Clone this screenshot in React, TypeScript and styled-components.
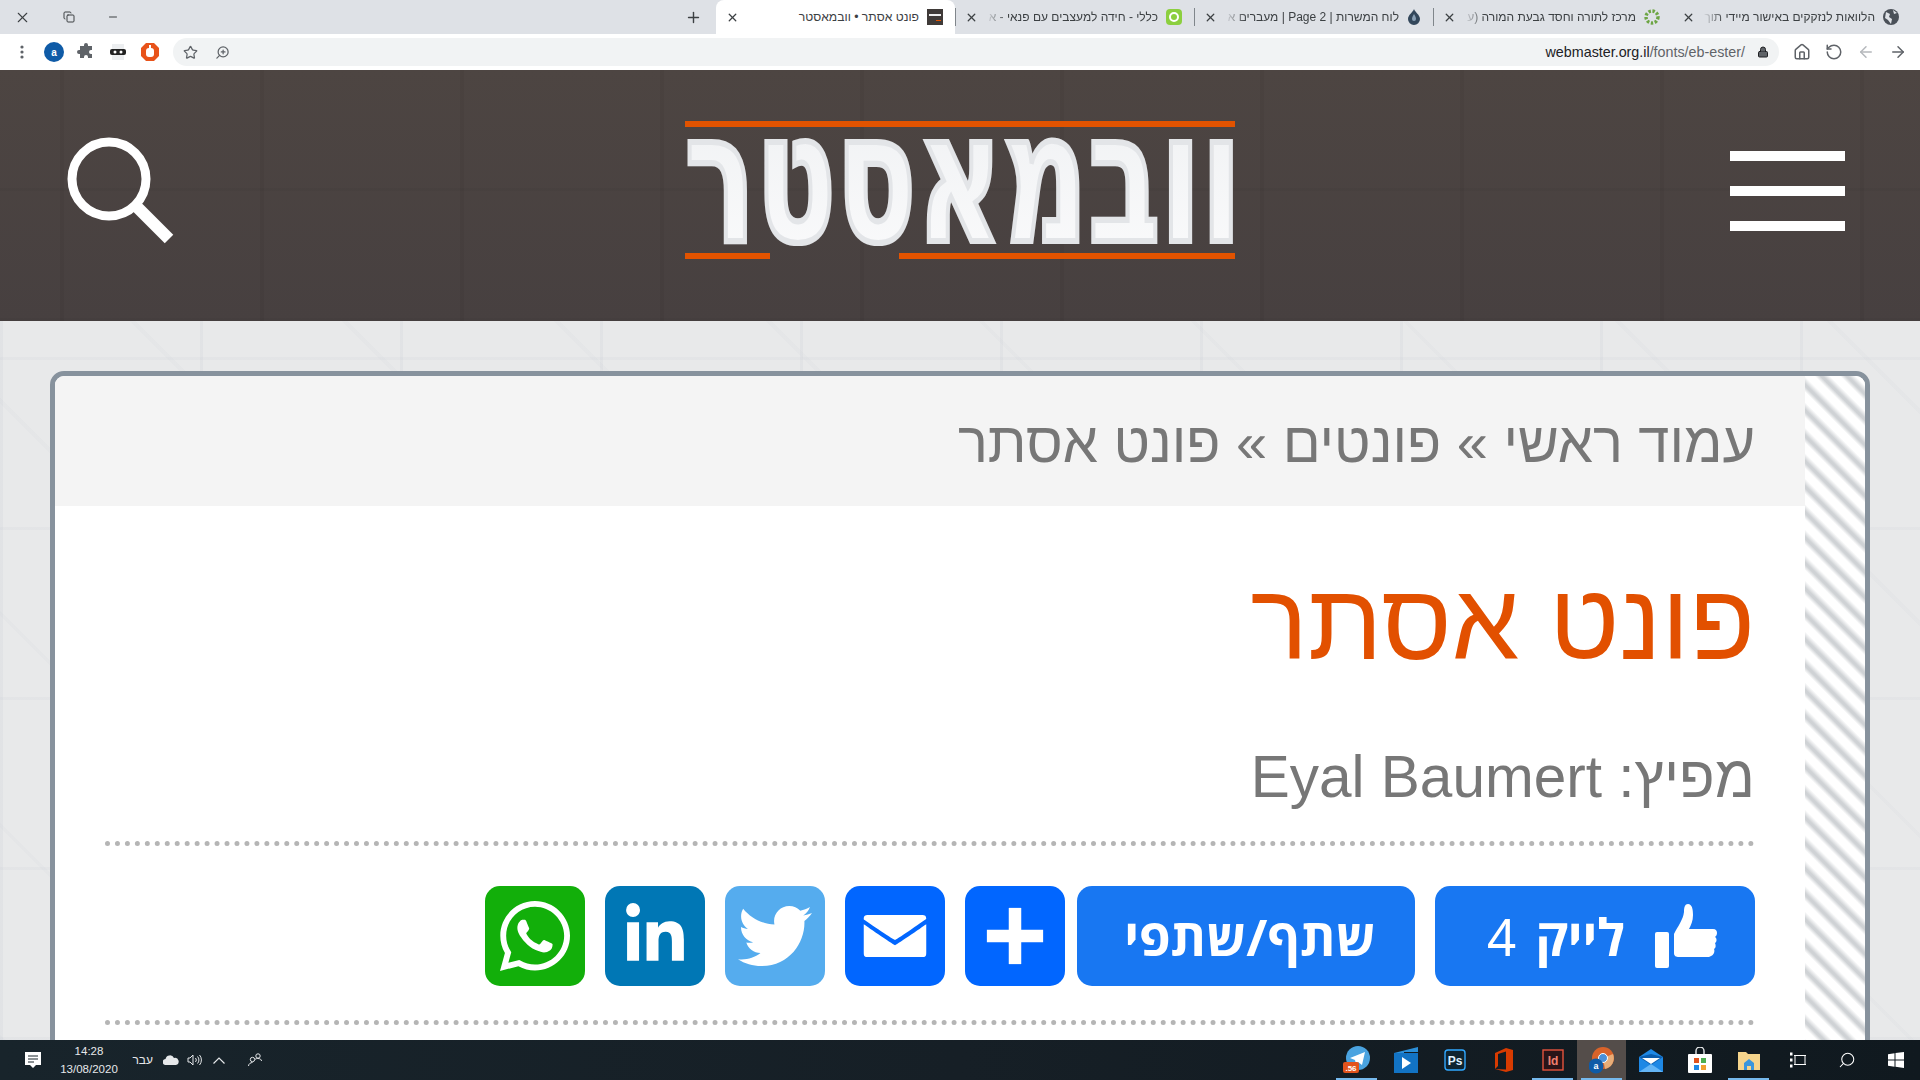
import React from 'react';
import styled, { createGlobalStyle } from 'styled-components';
import { ArrowLeft, ArrowRight, Copy, Home, Lock, Minus, Plus, RotateCcw, Search, Star, X, ZoomIn } from 'lucide-react';
import { FaLinkedinIn, FaTwitter, FaWhatsapp } from 'react-icons/fa';

const GlobalStyle = createGlobalStyle`
	html, body {
		margin: 0;
		padding: 0;
		overflow: hidden;
	}
	body {
		font-family: 'Liberation Sans', Arial, sans-serif;
	}
	* {
		box-sizing: border-box;
	}
`;

const Screen = styled.div`
	width: 1920px;
	height: 1080px;
	display: flex;
	flex-direction: column;
	overflow: hidden;
`;

/* browser chrome */
const TabStrip = styled.div`
	height: 34px;
	flex: none;
	display: flex;
	direction: rtl;
	align-items: stretch;
	padding-right: 9px;
	background: #dee1e6;
`;

const Tab = styled.div<{ $active?: boolean }>`
	width: 239px;
	flex: none;
	position: relative;
	display: flex;
	align-items: center;
	gap: 8px;
	padding: 0 12px 0 10px;
	font-size: 12px;
	color: #3c4043;
	background: ${(p) => (p.$active ? '#fff' : 'transparent')};
	border-radius: ${(p) => (p.$active ? '8px 8px 0 0' : '0')};
	${(p) =>
		!p.$active &&
		`&:not(:first-child)::after {
		content: '';
		position: absolute;
		left: 0;
		top: 8px;
		bottom: 8px;
		width: 1px;
		background: #80868b;
	}`}
`;

const TabTitle = styled.span`
	flex: 1;
	white-space: nowrap;
	overflow: hidden;
	-webkit-mask-image: linear-gradient(to left, #000 88%, transparent);
	mask-image: linear-gradient(to left, #000 88%, transparent);
`;

const ActiveTabTitle = styled.span`
	flex: 1;
	white-space: nowrap;
	font-size: 12.2px;
`;

const NewTab = styled.div`
	width: 46px;
	display: flex;
	align-items: center;
	justify-content: center;
	color: #3c4043;
`;

const WindowControls = styled.div`
	margin-right: auto;
	width: 135px;
	padding: 0 16px 0 14px;
	display: flex;
	align-items: center;
	justify-content: space-between;
	color: #3c4043;
`;

const Toolbar = styled.div`
	height: 36px;
	flex: none;
	display: flex;
	direction: rtl;
	align-items: center;
	background: #fff;
	padding: 0 13px 0 0;
`;

const NavGroup = styled.div`
	width: 128px;
	display: flex;
	align-items: center;
	gap: 14px;
	color: #5f6368;
	padding-left: 14px;
`;

const Omnibox = styled.div`
	width: 1606px;
	height: 28px;
	flex: none;
	display: flex;
	align-items: center;
	gap: 12px;
	padding: 0 10px;
	background: #f1f3f4;
	border-radius: 14px;
	color: #202124;
	font-size: 14.3px;
`;

const Url = styled.span`
	direction: ltr;
	color: #202124;
	span {
		color: #5f6368;
	}
`;

const OmniboxIcons = styled.div`
	margin-right: auto;
	display: flex;
	align-items: center;
	gap: 17px;
	color: #5f6368;
`;

const PageZoomIcon = styled(ZoomIn)`
	transform: scaleX(-1);
`;

const Extensions = styled.div`
	flex: 1;
	display: flex;
	direction: ltr;
	align-items: center;
	gap: 12px;
	padding-left: 18px;
`;

const ExtensionDots = styled.svg`
	margin-right: 6px;
`;

const Avatar = styled.div`
	width: 20px;
	height: 20px;
	border-radius: 50%;
	background: #0f5ba7;
	color: #fff;
	font-size: 10px;
	font-weight: 700;
	display: flex;
	align-items: center;
	justify-content: center;
`;

/* site header */
const SiteHeader = styled.header`
	height: 251px;
	flex: none;
	display: grid;
	grid-template-columns: 1fr auto 1fr;
	align-items: center;
	padding: 0 67px 10px;
	background-color: #4b4340;
	background-image: repeating-linear-gradient(90deg, rgba(0, 0, 0, 0.045) 0 4px, transparent 4px 200px),
		repeating-linear-gradient(0deg, rgba(0, 0, 0, 0.035) 0 3px, transparent 3px 130px),
		linear-gradient(#4d4542, #474040);
	background-position: 60px 0, 0 0, 0 0;
`;

const Burger = styled.div`
	justify-self: end;
	margin-right: 8px;
	width: 115px;
	display: flex;
	flex-direction: column;
	gap: 25px;
`;

const BurgerBar = styled.div`
	height: 10px;
	background: #fff;
`;

/* page */
const PageBody = styled.main`
	flex: 1;
	min-height: 0;
	overflow: hidden;
	padding: 50px 50px 0;
	background-color: #e8e9ea;
	background-image: repeating-linear-gradient(90deg, rgba(190, 195, 205, 0.16) 0 3px, transparent 3px 200px),
		repeating-linear-gradient(0deg, rgba(190, 195, 205, 0.12) 0 3px, transparent 3px 170px),
		repeating-linear-gradient(45deg, rgba(200, 204, 212, 0.1) 0 4px, transparent 4px 150px);
`;

const Card = styled.div`
	height: 900px;
	display: grid;
	grid-template-columns: 1fr 60px;
	border: 5px solid #87929d;
	border-radius: 14px;
	overflow: hidden;
	background: #fff;
`;

const Stripes = styled.div`
	background: repeating-linear-gradient(
		45deg,
		#fff 0,
		#fff 6px,
		#cfd2d5 10px,
		#cfd2d5 12px,
		#fff 17px,
		#fff 18px
	);
`;

const Main = styled.div`
	direction: rtl;
	display: flex;
	flex-direction: column;
`;

const Breadcrumb = styled.div`
	height: 130px;
	display: flex;
	align-items: center;
	padding: 4px 50px 0;
	background: #f4f4f4;
	color: #777;
	font-size: 56px;
	line-height: 1;
`;

const Content = styled.div`
	padding: 0 50px;
`;

const Title = styled.h1`
	margin: 65px 0 0;
	color: #e25000;
	font-size: 107.6px;
	font-weight: 400;
	line-height: 100px;
`;

const Publisher = styled.div`
	margin-top: 71px;
	padding-bottom: 29px;
	color: #777;
	font-size: 58.5px;
	line-height: 70px;
	border-bottom: 5px dotted #b5b5b5;
`;

const ShareRow = styled.div`
	display: flex;
	align-items: center;
	padding: 40px 0 34px;
	border-bottom: 5px dotted #b5b5b5;
`;

const WideButton = styled.div<{ $width: number; $gap: number }>`
	width: ${(p) => p.$width}px;
	height: 100px;
	flex: none;
	margin-left: ${(p) => p.$gap}px;
	padding-left: 8px;
	display: flex;
	align-items: center;
	justify-content: center;
	border-radius: 15px;
	background: #1877f2;
	color: #fff;
	font-family: 'Noto Sans', 'Open Sans', 'Liberation Sans', sans-serif;
	font-size: 51px;
	font-weight: 700;
	line-height: 1;
`;

const LikeButton = styled(WideButton)`
	justify-content: flex-start;
	padding: 0 38px 0 0;
	gap: 30px;
`;

const LikeCount = styled.span`
	font-weight: 400;
	margin-right: -11px;
`;

const IconButton = styled.div<{ $bg: string; $gap?: number }>`
	width: 100px;
	height: 100px;
	flex: none;
	margin-left: ${(p) => p.$gap ?? 20}px;
	display: flex;
	align-items: center;
	justify-content: center;
	border-radius: 15px;
	background: ${(p) => p.$bg};
	color: #fff;
`;

/* windows taskbar */
const Taskbar = styled.footer`
	height: 40px;
	flex: none;
	display: flex;
	justify-content: space-between;
	align-items: stretch;
	background: linear-gradient(90deg, #18242b, #161f26 50%, #10191f);
	color: #e6e8ea;
`;

const TrayLeft = styled.div`
	display: flex;
	align-items: center;
	padding-left: 25px;
`;

const TrayItem = styled.div<{ $gap: number; $width: number }>`
	margin-left: ${(p) => p.$gap}px;
	width: ${(p) => p.$width}px;
	flex: none;
	display: flex;
	align-items: center;
	justify-content: center;
`;

const Clock = styled.div`
	margin-left: 19px;
	width: 58px;
	flex: none;
	text-align: center;
	font-size: 11.5px;
	line-height: 18px;
	white-space: nowrap;
`;

const Lang = styled.div`
	margin-left: 13px;
	width: 22px;
	font-size: 12px;
	direction: rtl;
	white-space: nowrap;
`;

const Apps = styled.div`
	display: flex;
`;

const AppSlot = styled.div<{ $open?: boolean; $current?: boolean }>`
	width: 49px;
	position: relative;
	display: flex;
	align-items: center;
	justify-content: center;
	background: ${(p) => (p.$current ? '#544d4a' : 'transparent')};
	${(p) =>
		p.$open &&
		`&::after {
		content: '';
		position: absolute;
		left: 4px;
		right: 4px;
		bottom: 0;
		height: 2px;
		background: #76b9ed;
	}`}
`;

const TaskbarSearch = styled(Search)`
	transform: scaleX(-1);
`;

const Logo = () => (
	<svg width="570" height="140" viewBox="-10 0 570 140">
		<defs>
			<linearGradient id="logoFill" x1="0" y1="0" x2="0" y2="1">
				<stop offset="0" stopColor="#eef0f2" />
				<stop offset="1" stopColor="#fbfbfc" />
			</linearGradient>
		</defs>
		<rect x="0" y="0" width="550" height="6" fill="#e25300" />
		<rect x="0" y="132" width="85" height="6" fill="#e25300" />
		<rect x="214" y="132" width="336" height="6" fill="#e25300" />
		<g transform="translate(278 120) scale(1 1.81)">
			<text
				x="0"
				y="0"
				textAnchor="middle"
				textLength="557"
				lengthAdjust="spacingAndGlyphs"
				fontFamily="'DejaVu Sans', sans-serif"
				fontWeight="700"
				fontSize="100"
				fill="url(#logoFill)"
				stroke="#e3e5e8"
				strokeWidth="5"
				vectorEffect="non-scaling-stroke"
			>
				וובמאסטר
			</text>
		</g>
	</svg>
);

const SearchGlass = () => (
	<svg width="108" height="108" viewBox="0 0 108 108">
		<circle cx="42" cy="42" r="37" fill="none" stroke="#fff" strokeWidth="9" />
		<path d="M68 68 L102 102" stroke="#fff" strokeWidth="12" />
	</svg>
);

const ThumbIcon = () => (
	<svg width="62" height="64" viewBox="0 0 62 64">
		<rect x="0" y="28" width="14" height="36" rx="2" fill="#fff" />
		<path
			d="M19 30c4-8 9-14 10-22 0-5 1-8 4-8 4 0 5 5 5 11 0 6-2 10-4 14h24c3 0 4 2 4 4 0 2-1 3-2 4 2 1 2 5 0 6 1 2 1 5-1 6 1 2 0 6-3 7-1 1-3 1-5 1H24c-3 0-5-1-5-4z"
			fill="#fff"
		/>
	</svg>
);

const MailIcon = () => (
	<svg width="100" height="100" viewBox="0 0 32 32">
		<path
			fill="#fff"
			d="M26 21.25v-9s-9.1 6.35-9.984 6.68C15.144 18.616 6 12.25 6 12.25v9c0 1.25.266 1.5 1.5 1.5h17c1.266 0 1.5-.22 1.5-1.5zm-.015-10.765c0-.91-.265-1.235-1.485-1.235h-17c-1.255 0-1.5.39-1.5 1.3l.015.14s9.035 6.22 10 6.56c1.02-.395 9.985-6.7 9.985-6.7l-.015-.065z"
		/>
	</svg>
);

const PlusIcon = () => (
	<svg width="100" height="100" viewBox="0 0 32 32">
		<path fill="#fff" d="M14 7h4v18h-4z" />
		<path fill="#fff" d="M7 14h18v4H7z" />
	</svg>
);

const Favicon = ({ kind }: { kind: string }) => {
	if (kind === 'globe')
		return (
			<svg width="16" height="16" viewBox="0 0 16 16">
				<circle cx="8" cy="8" r="8" fill="#4a5058" />
				<path d="M3 3l4 2-1 3 3 2-1 5-3-4-3-2zM10 1l4 3-3 1z" fill="#dee1e6" />
			</svg>
		);
	if (kind === 'gear')
		return (
			<svg width="16" height="16" viewBox="0 0 16 16">
				<circle cx="8" cy="8" r="6" fill="none" stroke="#6da544" strokeWidth="3.4" strokeDasharray="2.4 1.6" />
			</svg>
		);
	if (kind === 'drop')
		return (
			<svg width="14" height="16" viewBox="0 0 14 16">
				<path d="M7 0c1 3 6 6 6 10a6 6 0 0 1-12 0c0-4 5-7 6-10z" fill="#33475b" />
				<path d="M7 5c1 2 2 3 2 5a2 2 0 0 1-4 0c0-2 1-3 2-5z" fill="#8aa0b5" />
			</svg>
		);
	if (kind === 'swirl')
		return (
			<svg width="16" height="16" viewBox="0 0 16 16">
				<rect width="16" height="16" rx="4" fill="#8ccf3f" />
				<circle cx="8" cy="8" r="4" fill="none" stroke="#fff" strokeWidth="2" />
			</svg>
		);
	return (
		<svg width="16" height="16" viewBox="0 0 16 16">
			<rect width="16" height="16" fill="#3f3a38" />
			<rect x="2" y="5" width="12" height="2" fill="#eee" />
			<rect x="9" y="11" width="5" height="1" fill="#e25300" />
		</svg>
	);
};

const tabs = [
	{ title: 'הלוואות לנזקקים באישור מיידי תוך', icon: 'globe' },
	{ title: 'מרכז לתורה וחסד גבעת המורה (ע', icon: 'gear' },
	{ title: 'לוח המשרות | Page 2 | מעברים א', icon: 'drop' },
	{ title: 'כללי - חידה למעצבים עם פנאי - א', icon: 'swirl' },
];

const TabCloseIcon = () => <X size={13} strokeWidth={2.4} color="#3c4043" />;

const App: React.FC = () => {
	return (
		<Screen>
			<GlobalStyle />
			<TabStrip>
				{tabs.map((tab) => (
					<Tab key={tab.icon}>
						<Favicon kind={tab.icon} />
						<TabTitle>{tab.title}</TabTitle>
						<TabCloseIcon />
					</Tab>
				))}
				<Tab $active>
					<Favicon kind="site" />
					<ActiveTabTitle>פונט אסתר • וובמאסטר</ActiveTabTitle>
					<TabCloseIcon />
				</Tab>
				<NewTab>
					<Plus size={17} strokeWidth={2} />
				</NewTab>
				<WindowControls>
					<Minus size={12} />
					<Copy size={12} />
					<X size={17} strokeWidth={1.5} />
				</WindowControls>
			</TabStrip>
			<Toolbar>
				<NavGroup>
					<ArrowRight size={18} />
					<ArrowLeft size={18} color="#b5b8bc" />
					<RotateCcw size={18} />
					<Home size={18} />
				</NavGroup>
				<Omnibox>
					<Lock size={12} fill="#5f6368" />
					<Url>
						webmaster.org.il<span>/fonts/eb-ester/</span>
					</Url>
					<OmniboxIcons>
						<PageZoomIcon size={15} />
						<Star size={15} />
					</OmniboxIcons>
				</Omnibox>
				<Extensions>
					<ExtensionDots width="8" height="16" viewBox="0 0 8 16">
						<circle cx="4" cy="3" r="1.6" fill="#5f6368" />
						<circle cx="4" cy="8" r="1.6" fill="#5f6368" />
						<circle cx="4" cy="13" r="1.6" fill="#5f6368" />
					</ExtensionDots>
					<Avatar>a</Avatar>
					<svg width="20" height="20" viewBox="0 0 20 20">
						<path d="M8 3a2 2 0 0 1 4 0v1h4v4h-1a2 2 0 0 0 0 4h1v4h-4v-1a2 2 0 0 0-4 0v1H4v-4H3a2 2 0 0 1 0-4h1V4h4z" fill="#5f6368" />
					</svg>
					<svg width="20" height="20" viewBox="0 0 20 20">
						<rect x="4" y="2" width="12" height="16" fill="#eceef0" />
						<rect x="2" y="7" width="16" height="6" rx="2" fill="#222" />
						<circle cx="7" cy="10" r="1.5" fill="#fff" />
						<circle cx="13" cy="10" r="1.5" fill="#fff" />
					</svg>
					<svg width="20" height="20" viewBox="0 0 20 20">
						<path d="M6 1h8l5 5v8l-5 5H6l-5-5V6z" fill="#e8531a" />
						<rect x="6" y="6" width="8" height="9" rx="3" fill="#fff" />
						<rect x="9" y="3" width="2" height="6" fill="#fff" />
					</svg>
				</Extensions>
			</Toolbar>
			<SiteHeader>
				<SearchGlass />
				<Logo />
				<Burger>
					<BurgerBar />
					<BurgerBar />
					<BurgerBar />
				</Burger>
			</SiteHeader>
			<PageBody>
				<Card>
					<Main>
						<Breadcrumb>עמוד ראשי » פונטים » פונט אסתר</Breadcrumb>
						<Content>
							<Title>פונט אסתר</Title>
							<Publisher>מפיץ: Eyal Baumert</Publisher>
							<ShareRow>
								<LikeButton $width={320} $gap={20}>
									<ThumbIcon />
									<span>לייק</span>
									<LikeCount>4</LikeCount>
								</LikeButton>
								<WideButton $width={338} $gap={12}>
									שתף/שתפי
								</WideButton>
								<IconButton $bg="#0166ff">
									<PlusIcon />
								</IconButton>
								<IconButton $bg="#0166ff">
									<MailIcon />
								</IconButton>
								<IconButton $bg="#55acee">
									<FaTwitter size={74} />
								</IconButton>
								<IconButton $bg="#0077b5">
									<FaLinkedinIn size={66} />
								</IconButton>
								<IconButton $bg="#12af0a" $gap={0}>
									<FaWhatsapp size={80} />
								</IconButton>
							</ShareRow>
						</Content>
					</Main>
					<Stripes />
				</Card>
			</PageBody>
			<Taskbar>
				<TrayLeft>
					<svg width="16" height="17" viewBox="0 0 16 17">
						<path d="M0 0h16v13h-5l-3 3-3-3H0z" fill="#fff" />
						<path d="M3 4h10M3 7h10M3 10h6" stroke="#18242b" strokeWidth="1" />
					</svg>
					<Clock>
						14:28
						<br />
						13/08/2020
					</Clock>
					<Lang>עבר</Lang>
					<TrayItem $gap={10} $width={16}>
						<svg width="16" height="10" viewBox="0 0 16 10">
							<path d="M3 10a3 3 0 0 1-.5-6A4.5 4.5 0 0 1 11 3a3.5 3.5 0 0 1 2 7z" fill="#e6e8ea" />
						</svg>
					</TrayItem>
					<TrayItem $gap={8} $width={16}>
						<svg width="16" height="14" viewBox="0 0 16 14" fill="none" stroke="#e6e8ea">
							<path d="M1 5h2l3-3v10l-3-3H1z" />
							<path d="M8.5 5a3 3 0 0 1 0 4M10.5 3.5a5 5 0 0 1 0 7M12.5 2a7.5 7.5 0 0 1 0 10" />
						</svg>
					</TrayItem>
					<TrayItem $gap={10} $width={12}>
						<svg width="12" height="7" viewBox="0 0 12 7" fill="none" stroke="#e6e8ea" strokeWidth="1.2">
							<path d="M0.5 6.5L6 1l5.5 5.5" />
						</svg>
					</TrayItem>
					<TrayItem $gap={23} $width={14}>
						<svg width="14" height="14" viewBox="0 0 14 14" fill="none" stroke="#e6e8ea">
							<circle cx="4.5" cy="6.5" r="2.2" />
							<circle cx="10" cy="3" r="2.2" />
							<path d="M0.5 13c0-2 2-3.5 4-3.5M7 6.5c1-1 2-1 3-1 2 0 3.5 1 3.5 2.5" />
						</svg>
					</TrayItem>
				</TrayLeft>
				<Apps>
					<AppSlot $open>
						<svg width="28" height="28" viewBox="0 0 28 28">
							<circle cx="15" cy="12" r="12" fill="#4aa3e0" />
							<path d="M7 12l15-6-3 13-4-3-2 2-1-4z" fill="#fff" />
							<rect x="0" y="16" width="16" height="11" rx="2" fill="#e2531d" />
							<text x="8" y="25" fontSize="8" fontWeight="700" fill="#fff" textAnchor="middle" fontFamily="'Liberation Sans', sans-serif">
								.56
							</text>
						</svg>
					</AppSlot>
					<AppSlot>
						<svg width="24" height="26" viewBox="0 0 24 26">
							<path d="M0 6l24-6v5H10v1H0z" fill="#2c8fd8" />
							<rect y="6" width="24" height="20" fill="#1273c4" />
							<path d="M8 10l9 6-9 6z" fill="#fff" />
						</svg>
					</AppSlot>
					<AppSlot>
						<svg width="22" height="22" viewBox="0 0 22 22">
							<rect x="1" y="1" width="20" height="20" rx="3" fill="#0f2430" stroke="#31a8ff" strokeWidth="1.4" />
							<text x="11" y="16" fontSize="12" fontWeight="700" fill="#dff1ff" textAnchor="middle" fontFamily="'Liberation Sans', sans-serif">
								Ps
							</text>
						</svg>
					</AppSlot>
					<AppSlot>
						<svg width="18" height="24" viewBox="0 0 18 24">
							<path d="M11 0l7 2v20l-7 2-11-3 11 .5V3.5L3 6v12l-3 3V5z" fill="#d83b01" />
						</svg>
					</AppSlot>
					<AppSlot $open>
						<svg width="22" height="22" viewBox="0 0 22 22">
							<rect x="1" y="1" width="20" height="20" fill="#2a1418" stroke="#e5533d" strokeWidth="1.4" />
							<text x="11" y="16" fontSize="12" fontWeight="700" fill="#f08070" textAnchor="middle" fontFamily="'Liberation Sans', sans-serif">
								Id
							</text>
						</svg>
					</AppSlot>
					<AppSlot $open $current>
						<svg width="26" height="28" viewBox="0 0 26 28">
							<circle cx="14" cy="12" r="11" fill="#d9632a" />
							<path d="M14 12L24 8a11 11 0 0 1-8 15z" fill="#e8ad78" />
							<path d="M14 12L3 14a11 11 0 0 0 3 5z" fill="#4caf50" />
							<circle cx="14" cy="12" r="4.5" fill="#4a90d9" stroke="#fff" />
							<circle cx="7" cy="20" r="7.5" fill="#0f5ba7" />
							<text x="7" y="23" fontSize="9" fontWeight="700" fill="#fff" textAnchor="middle" fontFamily="'Liberation Sans', sans-serif">
								a
							</text>
						</svg>
					</AppSlot>
					<AppSlot>
						<svg width="24" height="23" viewBox="0 0 24 23">
							<path d="M0 8L12 0l12 8v15H0z" fill="#1e88e5" />
							<path d="M0 8l12 8 12-8-12-3z" fill="#0b5cad" />
							<path d="M3 9h18l-9 6z" fill="#fff" />
							<path d="M0 23l12-8 12 8z" fill="#64b5f6" />
						</svg>
					</AppSlot>
					<AppSlot>
						<svg width="24" height="26" viewBox="0 0 24 26">
							<path d="M8 8V4a4 4 0 0 1 8 0v4" fill="none" stroke="#e6e8ea" strokeWidth="1.4" />
							<rect y="7" width="24" height="19" rx="1" fill="#fff" />
							<rect x="6" y="11" width="5" height="5" fill="#e2531d" />
							<rect x="13" y="11" width="5" height="5" fill="#4caf50" />
							<rect x="6" y="18" width="5" height="5" fill="#1e88e5" />
							<rect x="13" y="18" width="5" height="5" fill="#f0a030" />
						</svg>
					</AppSlot>
					<AppSlot $open>
						<svg width="22" height="20" viewBox="0 0 22 20">
							<path d="M0 2h8l2 2h12v16H0z" fill="#f5d48c" />
							<path d="M6 13l5-4 5 4v7h-3v-4H9v4H6z" fill="#3a96dd" />
						</svg>
					</AppSlot>
					<AppSlot>
						<svg width="16" height="16" viewBox="0 0 16 16" fill="none" stroke="#fff">
							<path d="M4 3.5h12M4 12.5h12M5 3.5v9M15 3.5v9" />
							<rect x="0" y="1" width="2" height="2" fill="#fff" />
							<rect x="0" y="7" width="2" height="2" fill="#fff" />
							<rect x="0" y="13" width="2" height="2" fill="#fff" />
						</svg>
					</AppSlot>
					<AppSlot>
						<TaskbarSearch size={18} color="#fff" strokeWidth={1.4} />
					</AppSlot>
					<AppSlot>
						<svg width="16" height="16" viewBox="0 0 16 16">
							<path d="M0 2.3l6.5-1v6.2H0zM7.5 1.1L16 0v7.5H7.5zM0 8.5h6.5v6.2l-6.5-1zM7.5 8.5H16V16l-8.5-1.2z" fill="#fff" />
						</svg>
					</AppSlot>
				</Apps>
			</Taskbar>
		</Screen>
	);
};

export default App;
